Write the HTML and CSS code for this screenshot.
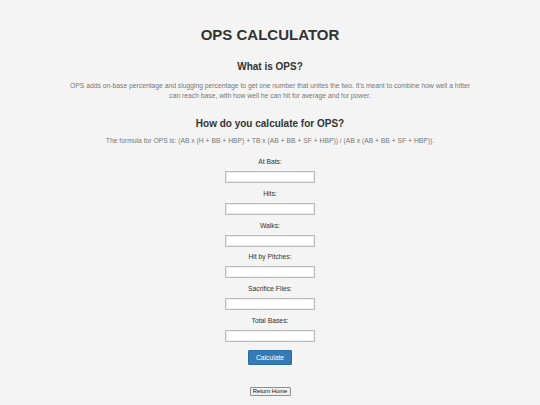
FILE: index.html
```html
<!DOCTYPE html>
<html lang="en">
<head>
<meta charset="utf-8">
<title>OPS Calculator</title>
<link rel="stylesheet" href="styles.css">
</head>
<body>
<main class="page">
  <h1 class="title">OPS CALCULATOR</h1>
  <h2 class="heading heading-what">What is OPS?</h2>
  <p class="text text-intro">OPS adds on-base percentage and slugging percentage to get one number that unites the two. It's meant to combine how well a hitter can reach base, with how well he can hit for average and for power.</p>
  <h2 class="heading heading-how">How do you calculate for OPS?</h2>
  <p class="text text-formula">The formula for OPS is: (AB x (H + BB + HBP) + TB x (AB + BB + SF + HBP)) / (AB x (AB + BB + SF + HBP)).</p>
  <form class="calc">
    <label class="field"><span class="field-label">At Bats:</span><input class="field-input" type="text"></label>
    <label class="field"><span class="field-label">Hits:</span><input class="field-input" type="text"></label>
    <label class="field"><span class="field-label">Walks:</span><input class="field-input" type="text"></label>
    <label class="field"><span class="field-label">Hit by Pitches:</span><input class="field-input" type="text"></label>
    <label class="field"><span class="field-label">Sacrifice Flies:</span><input class="field-input" type="text"></label>
    <label class="field"><span class="field-label">Total Bases:</span><input class="field-input" type="text"></label>
    <button class="btn-calc" type="button">Calculate</button>
  </form>
  <button class="btn-home" type="button">Return Home</button>
</main>
</body>
</html>
```

FILE: styles.css
```css
html, body {
  margin: 0;
  padding: 0;
  background: #f4f4f4;
}
body {
  font-family: "Liberation Sans", Arial, sans-serif;
  color: #333;
  width: 540px;
  height: 405px;
  overflow: hidden;
}
.page {
  display: flex;
  flex-direction: column;
  align-items: center;
  text-align: center;
}
.title {
  font-size: 15px;
  line-height: 18px;
  font-weight: bold;
  margin: 26px 0 0;
  color: #333;
}
.heading {
  font-size: 10px;
  line-height: 14px;
  font-weight: bold;
  margin: 0;
  color: #333;
}
.heading-what { margin-top: 16px; }
.heading-how { margin-top: 16px; }
.text {
  font-size: 6.75px;
  line-height: 10px;
  color: #777;
  margin: 0;
}
.text-intro {
  margin-top: 7px;
  max-width: 404px;
}
.text-formula {
  margin-top: 5px;
}
.calc {
  display: flex;
  flex-direction: column;
  align-items: center;
  margin-top: 11px;
}
.field {
  display: flex;
  flex-direction: column;
  align-items: center;
  gap: 4px;
  margin-bottom: 5.8px;
}
.field-label {
  font-size: 6.75px;
  line-height: 10px;
  color: #333;
}
.field-input {
  box-sizing: border-box;
  width: 90px;
  height: 12px;
  margin: 0;
  padding: 0 2px;
  border: 1px solid #bbb;
  box-shadow: inset 0 0 0 0.5px #ddd;
  background: #fff;
  font-size: 7px;
}
.btn-calc {
  margin-top: 2px;
  box-sizing: border-box;
  width: 44px;
  height: 15px;
  padding: 0;
  font-family: "Liberation Sans", Arial, sans-serif;
  font-size: 6.75px;
  color: #fff;
  background: #337ab7;
  border: 1px solid #2e6da4;
  border-radius: 1px;
}
.btn-home {
  margin-top: 22px;
  box-sizing: border-box;
  width: 41px;
  height: 9px;
  padding: 0;
  font-family: "Liberation Sans", Arial, sans-serif;
  font-size: 5.8px;
  line-height: 6px;
  color: #111;
  background: #efefef;
  border: 0.8px solid #8f8f8f;
  border-radius: 1px;
}
```
